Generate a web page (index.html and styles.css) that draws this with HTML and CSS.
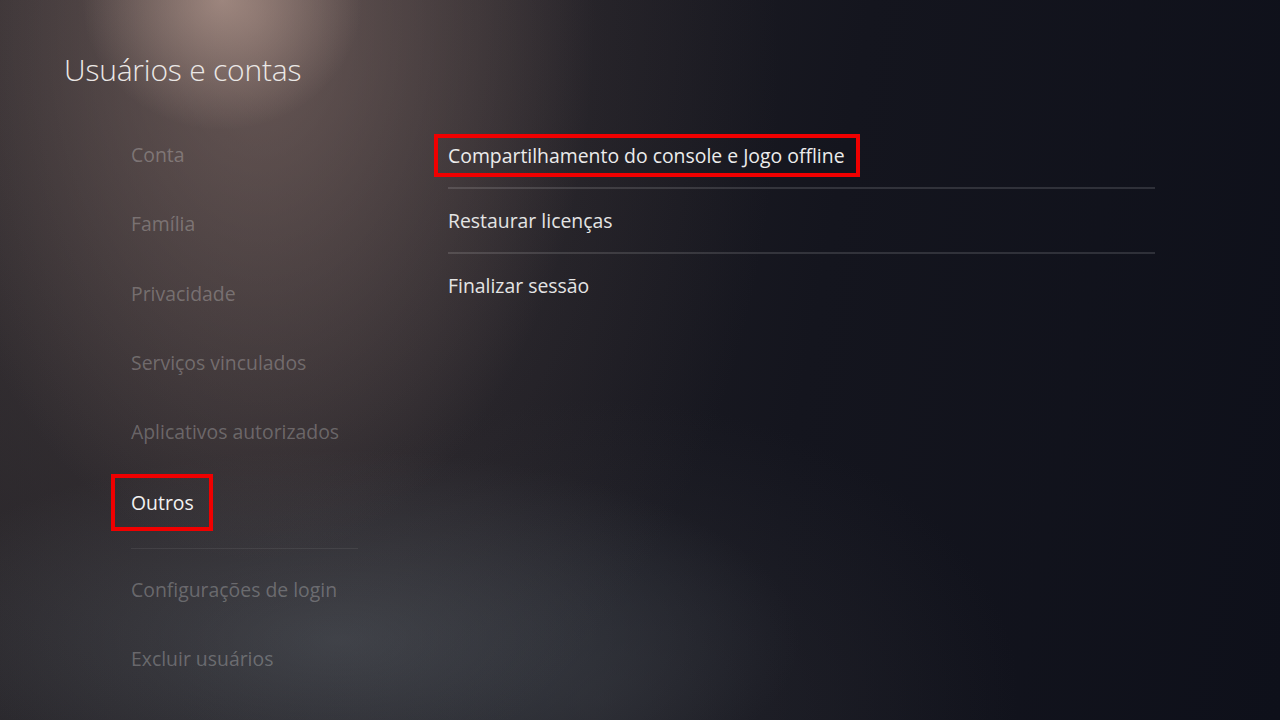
FILE: index.html
```html
<!DOCTYPE html>
<html lang="pt-BR">
<head>
<meta charset="utf-8">
<title>Usuários e contas</title>
<link rel="stylesheet" href="styles.css">
</head>
<body>
<div class="screen">
  <h1 class="title">Usuários e contas</h1>
  <div class="content">
    <nav class="side">
      <div class="side-item">Conta</div>
      <div class="side-item">Família</div>
      <div class="side-item">Privacidade</div>
      <div class="side-item">Serviços vinculados</div>
      <div class="side-item">Aplicativos autorizados</div>
      <div class="side-item active"><span class="focus-box side-box">Outros</span></div>
      <div class="side-sep"></div>
      <div class="side-item">Configurações de login</div>
      <div class="side-item">Excluir usuários</div>
    </nav>
    <ul class="list">
      <li class="row"><span class="focus-box row-box">Compartilhamento do console e Jogo offline</span></li>
      <li class="row">Restaurar licenças</li>
      <li class="row last">Finalizar sessão</li>
    </ul>
  </div>
</div>
</body>
</html>
```

FILE: styles.css
```css
html, body {
  margin: 0;
  padding: 0;
  background: #0e101a;
}

.screen {
  width: 1280px;
  height: 720px;
  overflow: hidden;
  box-sizing: border-box;
  font-family: "Open Sans", "Noto Sans", sans-serif;
  color: #e6e6e6;
  background:
    radial-gradient(ellipse 140px 130px at 222px 0px, rgba(205, 175, 162, 0.55), rgba(205, 175, 162, 0) 100%),
    radial-gradient(ellipse 340px 540px at 255px 20px, rgba(135, 112, 106, 0.58), rgba(135, 112, 106, 0) 100%),
    radial-gradient(ellipse 520px 760px at 260px 60px, rgba(90, 76, 76, 0.45), rgba(90, 76, 76, 0) 100%),
    radial-gradient(ellipse 460px 190px at 340px 640px, rgba(82, 90, 98, 0.55), rgba(82, 90, 98, 0) 100%),
    radial-gradient(ellipse 420px 300px at 600px 700px, rgba(50, 50, 56, 0.5), rgba(50, 50, 56, 0) 100%),
    linear-gradient(100deg, #2a272b 0%, #201f25 35%, #14151e 62%, #0e101a 100%);
  padding: 49px 0 0 64px;
}

.title {
  margin: 0;
  font-size: 30px;
  font-weight: 300;
  line-height: 42px;
  color: #ebe8e6;
  letter-spacing: -0.2px;
}

.content {
  display: grid;
  grid-template-columns: 227px 707px;
  column-gap: 90px;
  margin-top: 29px;
  padding-left: 67px;
}

.side {
  display: flex;
  flex-direction: column;
}

.side-item {
  height: 69.3px;
  display: flex;
  align-items: center;
  font-size: 19.4px;
  color: rgba(255, 255, 255, 0.26);
  white-space: nowrap;
}

.side-item.active {
  color: #f2f2f2;
}

.focus-box {
  display: inline-block;
  border: 4px solid #f00000;
  box-sizing: border-box;
}

.side-box {
  margin-left: -20px;
  padding: 0 15px 0 16px;
  height: 57px;
  line-height: 49px;
  margin-top: 2px;
}

.side-sep {
  height: 1px;
  background: rgba(255, 255, 255, 0.07);
  margin: 12px 0 6px;
}

.list {
  list-style: none;
  margin: 0;
  padding: 0;
  margin-top: 4px;
}

.row {
  height: 63px;
  border-bottom: 2px solid rgba(255, 255, 255, 0.13);
  display: flex;
  align-items: center;
  font-size: 19.4px;
  color: #e4e4e4;
}

.row.last {
  border-bottom: none;
}

.row-box {
  margin-left: -14px;
  padding: 0 11px 0 10px;
  height: 43px;
  line-height: 35px;
  color: #ececec;
}
```
